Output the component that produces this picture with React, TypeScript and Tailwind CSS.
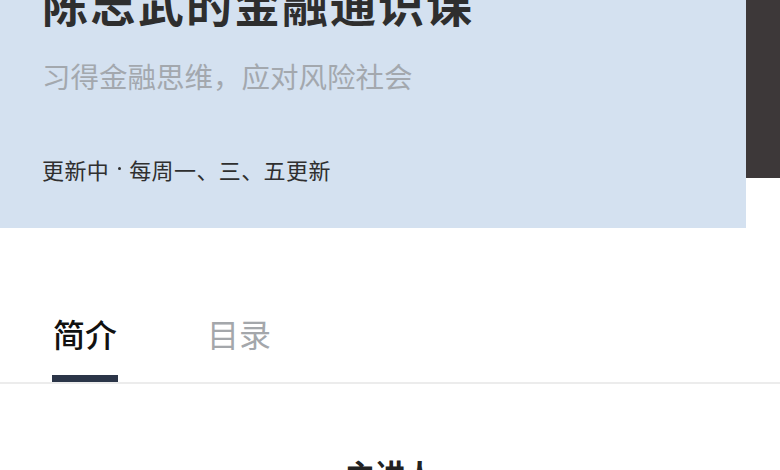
import React from "react";

export default function App() {
  return (
    <div
      className="w-[780px] h-[470px] overflow-hidden bg-white"
      style={{ fontFamily: '"Noto Sans CJK SC", "Noto Sans", sans-serif' }}
    >
      <div className="flex items-start">
        <div className="w-[746px] h-[228px] bg-[#d4e1f0] pl-[42px] flex flex-col">
          <div className="mt-[-21px] text-[46px] leading-none font-bold text-[#2e2e2e] tracking-[2px] whitespace-nowrap">
            陈志武的金融通识课
          </div>
          <div className="mt-[37px] text-[28.5px] leading-none text-[#a3a8ae] whitespace-nowrap">
            习得金融思维，应对风险社会
          </div>
          <div className="mt-[67px] text-[22px] leading-none text-[#2f2f2f] whitespace-nowrap flex items-center tracking-[0.4px]">
            <span>更新中</span>
            <span className="w-[20px] flex justify-center">
              <span className="block w-[3px] h-[3px] rounded-full bg-[#2f2f2f]" />
            </span>
            <span>每周一、三、五更新</span>
          </div>
        </div>
        <div className="w-[34px] h-[178px] bg-[#3d3839]" />
      </div>
      <div className="flex pl-[52px] gap-[89px] mt-[89px]">
        <div className="flex flex-col items-center">
          <div className="text-[32px] leading-none font-medium text-[#111] px-[1px]">简介</div>
          <div className="mt-[26px] w-[66px] h-[7px] bg-[#2b3548]" />
        </div>
        <div className="flex flex-col items-center">
          <div className="text-[32px] leading-none text-[#a4a7ab]">目录</div>
        </div>
      </div>
      <div className="h-[2px] bg-[#ececec]" />
      <div className="mt-[74px] text-center text-[30px] leading-none font-bold text-[#222]">主讲人</div>
    </div>
  );
}
